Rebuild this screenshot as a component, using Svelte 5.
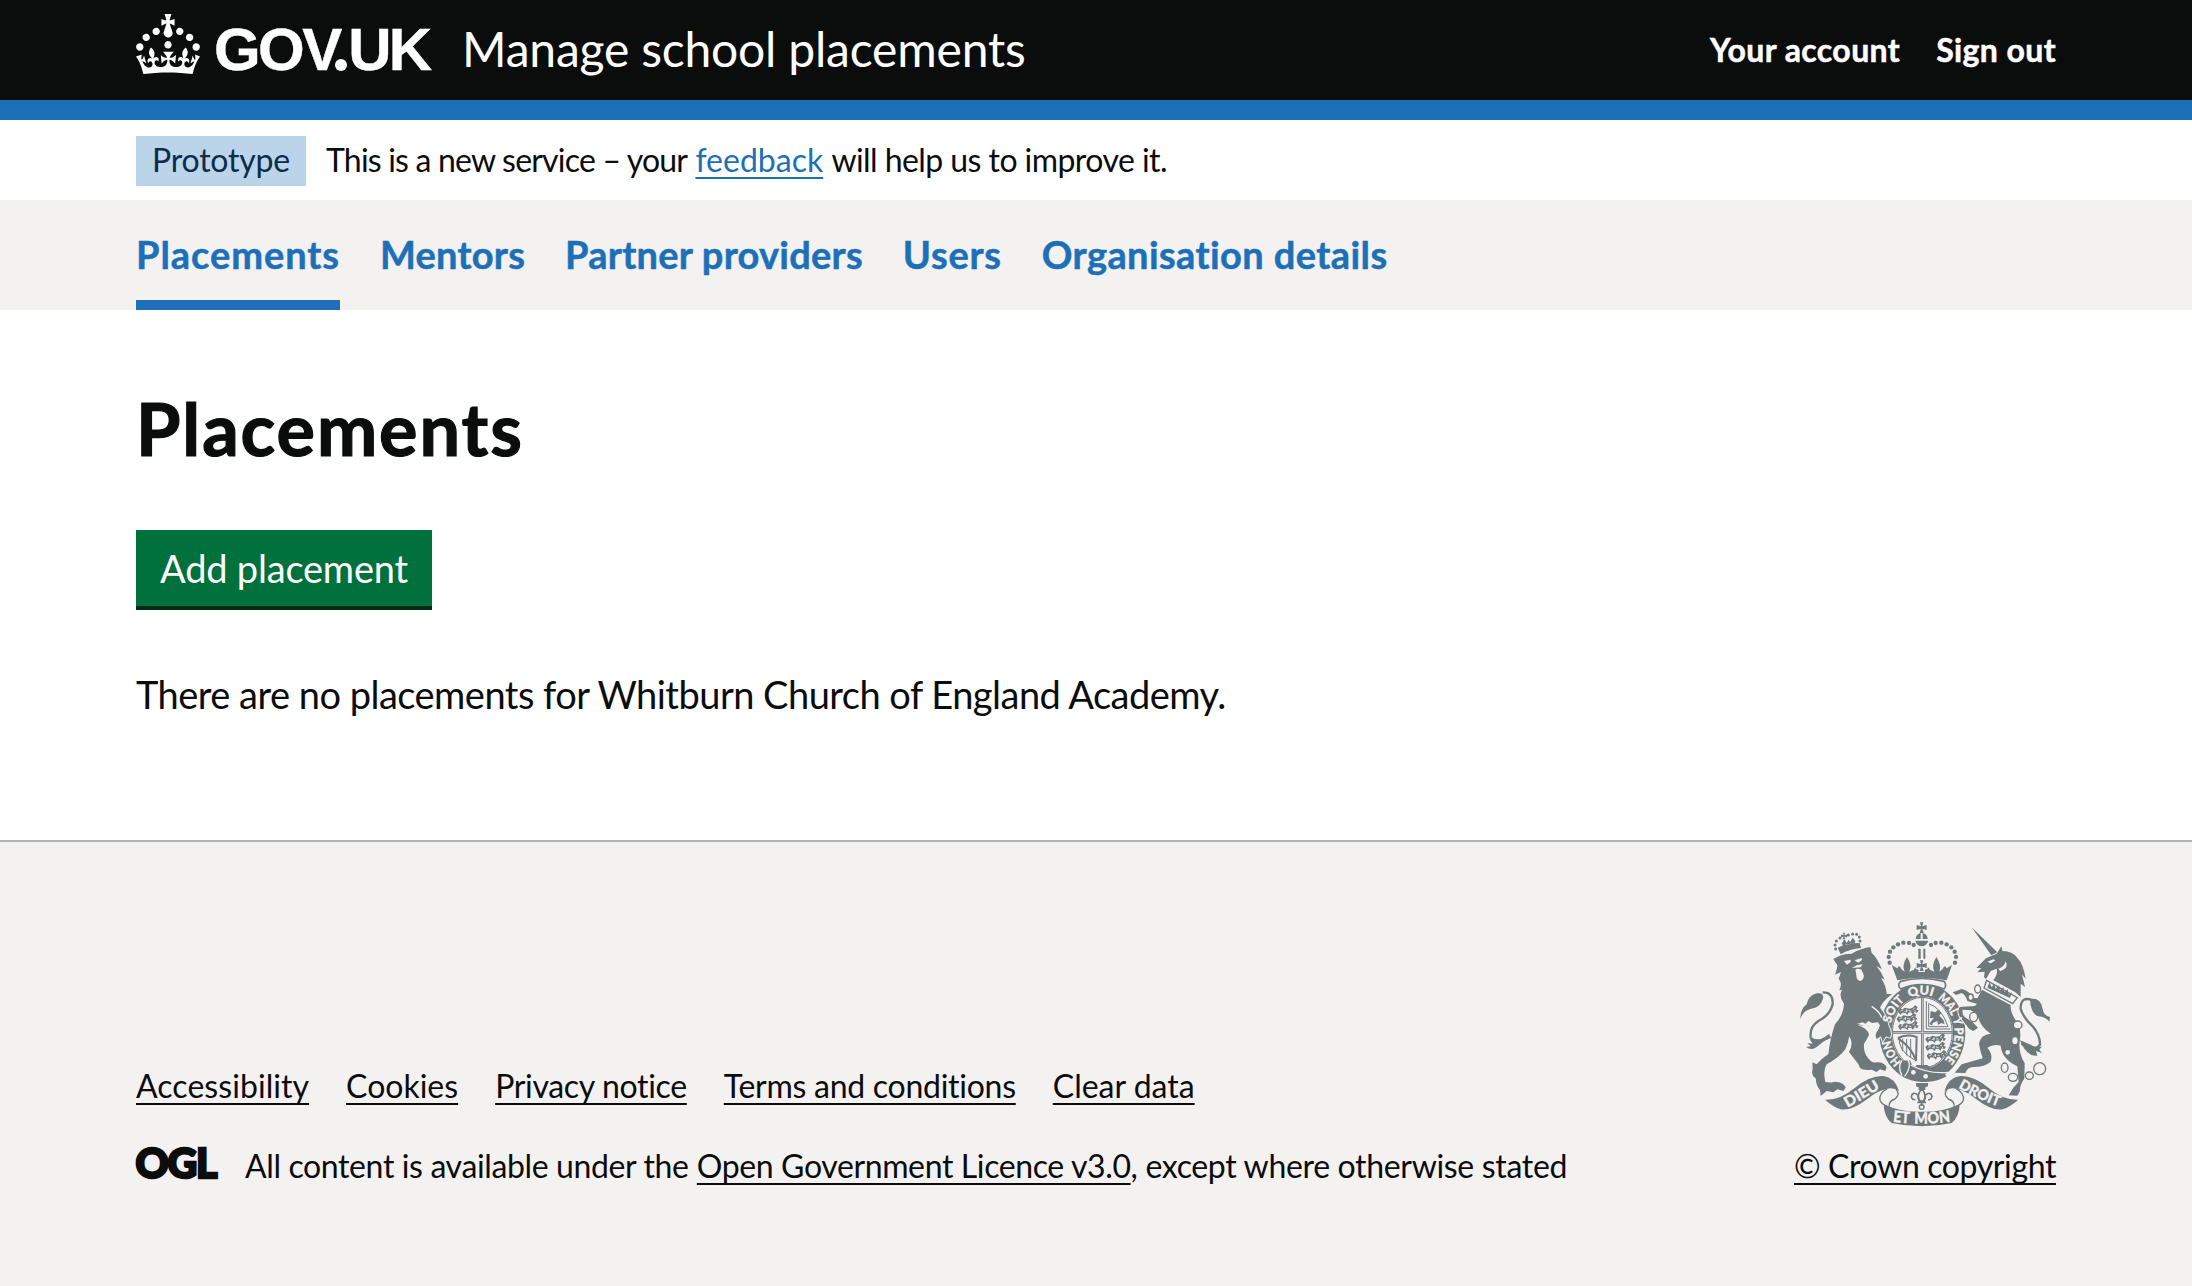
<script>
  const nav = [
    { label: 'Placements', cls: 'n1', current: true },
    { label: 'Mentors', cls: 'n2' },
    { label: 'Partner providers', cls: 'n3' },
    { label: 'Users', cls: 'n4' },
    { label: 'Organisation details', cls: 'n5' }
  ];
  const links = [
    { label: 'Accessibility', cls: 'f1' },
    { label: 'Cookies', cls: 'f2' },
    { label: 'Privacy notice', cls: 'f3' },
    { label: 'Terms and conditions', cls: 'f4' },
    { label: 'Clear data', cls: 'f5' }
  ];
  // Beads on the left half of the royal crown; the right half mirrors them.
  const beads = [[329,187],[326,170],[330,154],[340,141],[354,132],[370,127],[387,128],[401,134]];
  const smallBeads = [[167,146],[165,134],[169,122],[180,113],[205,104],[218,101],[230,102],[238,110],[240,122]];
  const lions = [[354,328],[350,351],[354,374],[436,412],[436,437],[440,462]];
  const lionPath = 'M0 4l6-7 7 2 8-5 12 3 10-2 8-8 8 5-4 8 7 2-5 8-8-3-4 7-6-6-8 1-3 7-6-6-10-1-4 7-5-6z';
  // Words on the garter: text, distance along the band, length.
  const words = [['HON', 0, 74], ['SOIT', 124, 82], ['QUI', 222, 72], ['MAL', 311, 68], ['Y', 388, 20], ['PENSE', 414, 104]];
</script>

<header class="header">
  <div class="container header-row">
    <a class="logo" href="#top" aria-label="GOV.UK">
      <svg class="crown" viewBox="0 0 32 30" aria-hidden="true">
        <path d="M22.6 10.4c-1 .4-2-.1-2.4-1-.4-.9.1-2 1-2.4.9-.4 2 .1 2.4 1s-.1 2-1 2.4m-5.9 6.7c-.9.4-2-.1-2.4-1-.4-.9.1-2 1-2.4.9-.4 2 .1 2.4 1s-.1 2-1 2.4m10.8-3.7c-1 .4-2-.1-2.4-1-.4-.9.1-2 1-2.4.9-.4 2 .1 2.4 1s0 2-1 2.4m3.3 4.8c-1 .4-2-.1-2.4-1-.4-.9.1-2 1-2.4.9-.4 2 .1 2.4 1s-.1 2-1 2.4M17 4.7l2.3 1.2V2.5l-2.3.7-.2-.2.9-3h-3.4l.9 3-.2.2c-.1.1-2.3-.7-2.3-.7v3.4L15 4.7c.1.1.1.2.2.2l-1.3 4c-.1.2-.1.4-.1.6 0 1.1.8 2 1.9 2.2h.7c1-.2 1.9-1.1 1.9-2.1 0-.2 0-.4-.1-.6l-1.3-4c-.1-.2 0-.2.1-.3m-7.6 5.7c.9.4 2-.1 2.4-1 .4-.9-.1-2-1-2.4-.9-.4-2 .1-2.4 1s0 2 1 2.4m-5 3c.9.4 2-.1 2.4-1 .4-.9-.1-2-1-2.4-.9-.4-2 .1-2.4 1s.1 2 1 2.4m-3.2 4.8c.9.4 2-.1 2.4-1 .4-.9-.1-2-1-2.4-.9-.4-2 .1-2.4 1s0 2 1 2.4m14.8 11c4.4 0 8.6.3 12.3.8 1.1-4.5 2.4-7 3.7-8.8l-2.5-.9c.2 1.3.3 1.9 0 2.7-.4-.4-.8-1.1-1.1-2.3l-1.2 4c.7-.5 1.3-.8 2-.9-1.1 2.5-2.6 3.1-3.5 3-1.1-.2-1.7-1.2-1.5-2.1.3-1.2 1.5-1.5 2.1-.1 1.1-2.3-.8-3-2-2.3 1.9-1.9 2.1-3.5.6-5.6-2.1 1.6-2.1 3.2-1.2 5.5-1.2-1.4-3.2-.6-2.5 1.6.9-1.4 2.1-.5 1.9.8-.2 1.1-1.7 2.1-3.5 1.9-2.7-.2-2.9-2.1-2.9-3.6.7-.1 1.9.5 2.9 1.9l.4-4.3c-1.1 1.1-2.1 1.4-3.2 1.4.4-1.2 2.1-3 2.1-3h-5.4s1.7 1.9 2.1 3c-1.1 0-2.1-.2-3.2-1.4l.4 4.3c1-1.4 2.2-2 2.9-1.9-.1 1.5-.2 3.4-2.9 3.6-1.9.2-3.4-.8-3.5-1.9-.2-1.3 1-2.2 1.9-.8.7-2.3-1.2-3-2.5-1.6.9-2.2.9-3.9-1.2-5.5-1.5 2-1.3 3.7.6 5.6-1.2-.7-3.1 0-2 2.3.6-1.4 1.8-1.1 2.1.1.2.9-.3 1.9-1.5 2.1-.9.2-2.4-.5-3.5-3 .6 0 1.2.3 2 .9l-1.2-4c-.3 1.1-.7 1.9-1.1 2.3-.3-.8-.2-1.4 0-2.7l-2.9.9C1.3 23 2.6 25.5 3.7 30c3.7-.5 7.9-.8 12.3-.8" />
      </svg>
      <span class="wordmark">GOV<span class="dot">.</span>UK</span>
    </a>
    <a class="service" href="#service">Manage school placements</a>
    <nav class="account">
      <a href="#account">Your account</a>
      <a href="#signout">Sign out</a>
    </nav>
  </div>
</header>

<div class="container phase">
  <strong class="tag">Prototype</strong>
  <span class="phase-text"><span class="p1">This is a new service – your</span> <a href="#feedback">feedback</a> <span class="p3">will help us to improve it.</span></span>
</div>

<nav class="nav">
  <div class="container nav-row">
    {#each nav as item}
      <a class={item.cls} class:current={item.current} href="#nav">{item.label}</a>
    {/each}
  </div>
</nav>

<main class="container main">
  <h1>Placements</h1>
  <button type="button">Add placement</button>
  <p>There are no placements for Whitburn Church of England Academy.</p>
</main>

<footer class="footer">
  <div class="container footer-row">
    <div class="meta">
      <div class="links">
        {#each links as link}
          <a class={link.cls} href="#footer">{link.label}</a>
        {/each}
      </div>
      <div class="licence">
        <svg class="ogl" viewBox="0 0 82 33" aria-hidden="true">
          <text x="-0.5" y="31" textLength="82" lengthAdjust="spacing">OGL</text>
        </svg>
        <span><span class="l1">All content is available under the</span> <a class="l2" href="#ogl">Open Government Licence v3.0</a><span class="l3">, except where otherwise stated</span></span>
      </div>
    </div>
    <div class="copyright">
      <svg class="arms" viewBox="60 65 750 615" aria-hidden="true">
        <defs>
          <path id="garterPath" d="M365 484A97 114 0 1 1 489 484" />
          <path id="dieu" d="M203 622Q250 596 306 560" />
          <path id="etmon" d="M338 664Q425 676 516 664" />
          <path id="droit" d="M534 562Q600 600 664 622" />
          <path id="patte" d="M-5-16h10l-3 12 13-4v15l-13-4 4 13h-12l4-13-13 4v-15l13 4z" />
        </defs>

        <!-- Garter and shield -->
        <path fill-rule="evenodd" d="M427 249A129 148 0 1 1 426.900 249ZM427 289A92 108 0 1 0 427.100 289Z" />
        <ellipse class="bg" cx="427" cy="397" rx="91" ry="107" />
        <ellipse class="line" cx="427" cy="397" rx="90" ry="106" stroke-width="3" />
        <path class="line" stroke-width="8" d="M427 291V500M338 396H517" />
        <path class="line light" stroke-width="2" d="M427 293V498M340 396H515" />
        {#each lions as [x, y]}
          <g transform={`translate(${x} ${y})`}>
            <path d={lionPath} />
            <path class="line light" stroke-width="2.500" d="M8 4l8-3M20 6l8-4M32 3l8 2M44 0l6-4M26-1v9M50 2l3 6" />
          </g>
        {/each}
        <path class="line" stroke-width="3" d="M439 302V386H511M446 310V379H504M446 310Q485 322 504 379" />
        <path d="M452 332l14 4 8-8 10 10-6 8 12 12 4 14-10-4-10 6-2-12-14 6-2 8-8-6 8-10 6-8-12 2z" />
        <path class="line" stroke-width="6" d="M354 414Q375 400 410 410L408 482Q395 440 354 414" />
        <path class="line" stroke-width="3" d="M358 408Q352 450 402 478M368 415V452M380 416V465M392 416V472" />
        <path d="M410 494H442L455 505H400Z" />

        <!-- Lion -->
        <path class="beast" d="M160 176Q185 160 215 160Q240 145 271 140L275 158Q290 170 306 207L289 197Q305 215 314 238L303 233Q318 255 320 280L336 282Q310 300 300 322Q320 345 325 375Q338 400 330 412L318 408L308 424L303 408L290 416Q282 400 294 390L300 375Q285 365 282 372L262 366L265 378L232 374Q266 385 267 404Q262 415 252 430Q250 455 262 470Q275 490 290 486Q310 484 320 500L316 512L300 507L290 515L275 508Q250 512 240 503Q235 488 225 478L207 455Q222 430 208 408Q204 430 196 447Q180 470 140 492Q128 510 136 545Q155 548 165 544Q192 545 197 562L190 572L172 567L160 576L140 572L122 587L120 570Q106 550 108 535Q92 525 98 505L97 486L110 492Q130 470 145 462Q150 415 165 372Q190 345 192 310Q175 290 186 268L178 270Q188 250 176 235L183 215L165 223Q172 205 172 195Z" />
        <path class="bg" d="M192 182l20-4 0 7-11 8zM224 180l20-7 3 5-12 9zM226 208q8-6 18 0l6 12q5 15-8 22q-14-1-13-18zM216 203l14-8 18-3-6 9z" />
        <path class="bg" d="M232 370l16-4 8 4 10-8 10 6 18-2 6 10-18 0 4 8-14 2-6-10-10 2z" />
        <path class="line light" stroke-width="4" d="M275 318Q300 335 305 352" />
        <path class="line" stroke-width="7" d="M128 276Q160 275 158 312Q150 345 115 362Q88 380 92 412Q105 430 152 410" />
        <path d="M60 357Q62 325 80 312Q85 285 110 279Q135 275 128 298Q120 322 93 325Q70 330 60 357ZM150 412Q125 425 110 440Q95 452 78 440L92 438L82 428L98 430L88 415Q110 430 148 400Z" />
        <path d="M173 142Q205 128 239 128L243 143Q210 145 182 162ZM185 130l8-14 7 12 6-10 4 8 8-14 8 11-3 8q-20-3-34 5z" />
        <use href="#patte" transform="translate(192 107) scale(.6)" />
        {#each smallBeads as [x, y]}<circle cx={x} cy={y} r="4.5" />{/each}

        <!-- Royal crown -->
        <use href="#patte" x="425" y="82" />
        <path d="M407 116Q408 101 422 98V116ZM428 98Q442 101 443 116H428ZM406 121H445Q440 137 425 138Q410 137 406 121ZM415 145h7v30h-7zM430 145h6v30h-6z" />
        {#each beads as [x, y]}
          <circle cx={x} cy={y} r="6.5" />
          <circle cx={850 - x + 4} cy={y} r="6.5" />
        {/each}
        <path d="M335 194L352 204Q358 190 364 206L374 214Q364 196 381 170Q398 196 388 214L402 208Q408 194 413 208L425 214L437 208Q442 194 450 208L463 214Q453 196 469 170Q486 196 478 214L488 206Q494 190 500 204L516 194L500 240Q425 225 352 240Z" />
        <use class="beast" href="#patte" x="425" y="196" />
        <path class="band" stroke-width="5" d="M362 243Q425 226 492 243Q502 255 492 266Q425 240 362 266Q350 255 362 243Z" />

        <!-- Unicorn -->
        <path d="M575 81L652 156L634 165Z" />
        <path d="M589 203L618 174L650 160L664 138L667 152Q700 152 714 175Q730 190 737 236L726 222L735 260L722 250L722 290L706 276L640 240Q655 220 650 205L632 212L618 236L612 230L614 214L592 216L604 203Z" />
        <path class="bg" d="M622 184l18-7 6 3-13 9zM655 205q18-4 22-22 12 20-16 30z" />
        <path class="beast" d="M606 268L692 314Q690 340 716 372Q725 400 718 430Q718 465 734 488L733 535Q718 555 720 572L712 586L686 585L700 562L716 545L712 498Q665 475 662 436Q640 430 622 442Q640 462 632 484Q615 500 580 500Q562 500 556 518L524 517L545 492L608 474Q600 450 597 430Q602 402 632 400Q602 380 595 352Q590 340 572 330L548 328Q545 340 554 350L578 366L594 382L580 392L568 386L540 350Q530 330 540 320L570 318Q590 318 590 310L574 306L562 302Q558 285 545 278L528 284L518 276L545 266Q570 272 578 292L592 294Z" />
        <path class="line chain" stroke-width="4" d="M620 240L712 292L698 310L612 263Z" />
        <path d="M622 262l6-16 7 14 8-9 4 14 10-10 3 15 10-10 3 15 10-8 3 16 10-8-6 18z" />
        <path class="line" stroke-width="7" d="M758 300Q722 285 722 325Q728 350 758 378Q780 405 780 432Q770 455 724 430" />
        <path d="M750 296Q782 290 788 325Q790 345 810 350L808 364Q798 350 775 348Q752 340 750 296ZM720 420Q745 430 755 435Q770 445 786 438L778 448L786 458L768 452L772 466Q745 470 724 430Z" />
        <g class="line" stroke-width="4">
          <ellipse class="chain" cx="593" cy="266" rx="9" ry="12" /><ellipse class="chain" cx="572" cy="291" rx="8" ry="10" /><ellipse class="chain" cx="581" cy="350" rx="12" ry="14" />
          <ellipse class="chain" cx="713" cy="374" rx="13" ry="12" /><ellipse class="chain" cx="705" cy="421" rx="10" ry="12" /><circle class="chain" cx="683" cy="456" r="9" />
          <ellipse cx="674" cy="502" rx="10" ry="14" /><ellipse cx="699" cy="531" rx="14" ry="12" /><ellipse cx="748" cy="526" rx="12" ry="11" /><circle cx="779" cy="505" r="18" />
        </g>

        <!-- Garter motto and buckle -->
        {#each words as [word, start, length]}
          <text class="motto ring"><textPath href="#garterPath" startOffset={start} textLength={length} lengthAdjust="spacingAndGlyphs">{word}</textPath></text>
        {/each}
        <path d="M362 482L390 480L398 498Q440 520 492 520L500 528Q440 560 385 530L362 524Z" />
        <path class="line light" stroke-width="4" d="M392 494Q445 522 505 516" />
        <path class="line light" stroke-width="4" d="M366 480Q352 500 366 526M384 478Q396 500 374 528" />
        <circle class="bg" cx="400" cy="516" r="7" /><circle class="bg" cx="437" cy="528" r="7" />

        <!-- Ribbon -->
        <g id="scroll">
          <path d="M135 598Q180 600 225 562Q270 525 310 527Q345 532 357 572Q340 560 322 565Q290 572 262 596Q215 632 182 627Q160 620 135 598Z" />
          <path class="line" stroke-width="4" d="M322 565Q296 578 300 600Q305 612 325 620M348 567Q362 582 345 596Q325 602 328 620" />
        </g>
        <use href="#scroll" transform="translate(850 0) scale(-1 1)" />
        <path d="M311 612Q370 638 425 634Q480 638 539 612Q538 650 515 668Q425 688 335 668Q312 650 311 612Z" />
        <text class="motto"><textPath href="#dieu" textLength="114" lengthAdjust="spacingAndGlyphs">DIEU</textPath></text>
        <text class="motto big"><textPath href="#etmon" textLength="174" lengthAdjust="spacingAndGlyphs">ET MON</textPath></text>
        <text class="motto"><textPath href="#droit" textLength="134" lengthAdjust="spacingAndGlyphs">DROIT</textPath></text>
        <path d="M408 548h36v10l-8 3v8h-20v-8l-8-3z" />
        <path class="line" stroke-width="5" d="M425 566Q408 584 420 602H430Q442 584 425 566ZM418 602Q412 592 414 584Q398 572 394 588Q396 600 406 598M432 602Q438 592 436 584Q452 572 456 588Q454 600 444 598M412 606H438M425 606V616" />
        <circle class="line" stroke-width="4" cx="425" cy="620" r="7" />
      </svg>
      <a class="c1" href="#copyright">© Crown copyright</a>
    </div>
  </div>
</footer>

<style>
  :global(body) {
    background: #fff;
    color: #0b0c0c;
    font-family: Lato, "Liberation Sans", sans-serif;
    font-size: 32px;
    line-height: 40px;
    font-variant-ligatures: none;
  }
  .container { width: 1920px; margin: 0 auto; }
  a { color: inherit; text-decoration: none; white-space: nowrap; }

  .header { background: #0b0c0c; border-bottom: 20px solid #1d70b8; color: #fff; }
  .header-row { height: 100px; display: flex; align-items: flex-start; }
  .logo { display: flex; align-items: flex-start; }
  .crown { width: 64px; height: 60px; margin-top: 14px; fill: currentColor; }
  .wordmark {
    width: 216px; margin-left: 14px; padding-top: 20px;
    font-family: "Liberation Sans", sans-serif; font-weight: 700; font-size: 60px; line-height: 60px;
    letter-spacing: -2.6px; -webkit-text-stroke: 0.4px #fff;
  }
  .dot { position: relative; color: transparent; -webkit-text-stroke: 0; }
  .dot::after {
    content: ""; position: absolute; left: 1px; bottom: 12px;
    width: 12px; height: 12px; border-radius: 50%; background: #fff;
  }
  .service { margin-left: 32px; padding-top: 19px; font-size: 48px; line-height: 60px; letter-spacing: -0.2px; }
  .account { margin-left: auto; padding-top: 30px; display: flex; gap: 36px; font-weight: 700; letter-spacing: 0.4px; -webkit-text-stroke: 0.5px #fff; }

  .phase { height: 50px; padding: 16px 0 14px; display: flex; align-items: center; }
  .tag { background: #bbd4ea; color: #0c2d4a; font-weight: 400; height: 50px; line-height: 48px; padding: 0 16px; margin-right: 20px; letter-spacing: -0.2px; }
  .phase-text { margin-bottom: 2px; }
  .phase a, .footer a {
    text-decoration: underline; text-decoration-thickness: 2px;
    text-underline-offset: 5px; text-decoration-skip-ink: none;
  }
  .phase a { color: #1d70b8; }
  .p1 { letter-spacing: -0.8px; }
  .p3 { letter-spacing: -0.56px; }

  .nav { background: #f3f2f1; color: #1d70b8; font-size: 38px; font-weight: 700; -webkit-text-stroke: 0.5px #1d70b8; }
  .nav-row { display: flex; gap: 40px; height: 110px; }
  .nav a { line-height: 108px; height: 110px; letter-spacing: 0.4px; }
  .nav .n1 { letter-spacing: 0.94px; }
  .nav .n2, .nav .n3 { letter-spacing: 0.24px; }
  .nav .n4 { letter-spacing: 0.75px; }
  .nav .current { box-shadow: inset 0 -10px #1d70b8; }

  .main { height: 530px; padding-top: 78px; box-sizing: border-box; }
  h1 { margin: 0 0 62px; font-size: 72px; line-height: 80px; letter-spacing: 1.9px; -webkit-text-stroke: 1.2px #0b0c0c; }
  button {
    display: block; width: 296px; height: 80px; padding: 0 0 4px; border: 0;
    background: #00703c; box-shadow: inset 0 -4px #002d18; color: #fff;
    font: 38px/76px Lato, sans-serif; letter-spacing: -0.2px; white-space: nowrap;
  }
  p { margin: 59px 0 0; font-size: 38px; line-height: 50px; letter-spacing: -0.52px; }

  .footer { background: #f3f2f1; border-top: 2px solid #b1b4b6; height: 444px; }
  .footer-row { display: flex; justify-content: space-between; align-items: flex-end; height: 344px; }
  .links { display: flex; gap: 37px; margin-bottom: 40px; }
  .licence { display: flex; align-items: center; }
  .ogl { width: 82px; height: 33px; margin: 0 27px 5px 0; overflow: visible; }
  .ogl text { font: 900 41px Lato, sans-serif; fill: #0b0c0c; stroke: #0b0c0c; stroke-width: 2.5px; }
  .l1 { letter-spacing: -0.37px; }
  .l2 { letter-spacing: -0.38px; }
  .l3 { letter-spacing: -0.33px; }
  .f1 { letter-spacing: 0.06px; }
  .f3 { letter-spacing: -0.33px; }
  .f4 { letter-spacing: -0.27px; }
  .c1 { letter-spacing: -0.38px; }
  .copyright { display: flex; flex-direction: column; align-items: flex-end; }
  .arms { width: 250px; height: 205px; margin: 0 6px 19px 0; fill: #6f787b; display: block; }
  .beast { stroke: #f3f2f1; stroke-width: 6px; paint-order: stroke; }
  .bg { fill: #f3f2f1; }
  .line { fill: none; stroke: #6f787b; }
  .light { stroke: #f3f2f1; }
  .chain { fill: #f3f2f1; }
  .band { fill: #f3f2f1; stroke: #6f787b; }
  .motto { font: 900 44px Lato, sans-serif; fill: #f3f2f1; stroke: #f3f2f1; stroke-width: 0.8px; }
  .big { font-size: 48px; word-spacing: 6px; }
  .ring { font-size: 37px; }
</style>
